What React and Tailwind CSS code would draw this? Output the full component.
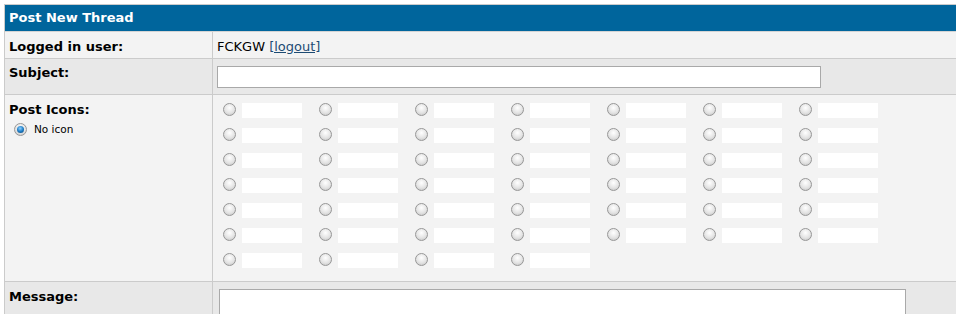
import React from 'react';

const font = { fontFamily: '"DejaVu Sans", Verdana, sans-serif' };

function Radio({ checked }) {
  return (
    <span className="relative inline-block w-[13px] h-[13px] shrink-0 rounded-full border border-[#979797] bg-[radial-gradient(circle_at_50%_35%,#ffffff_0%,#e4e4e4_55%,#c0c0c0_100%)]">
      {checked && (
        <span className="absolute left-[2px] top-[2px] w-[7px] h-[7px] rounded-full bg-[radial-gradient(circle_at_45%_35%,#8fd0ff_0%,#1f7fc8_50%,#0b3f6e_100%)]" />
      )}
    </span>
  );
}

function IconChoice() {
  return (
    <div className="flex items-start h-[25px]">
      <Radio />
      <span className="ml-[6px] w-[60px] h-[15px] bg-white" />
    </div>
  );
}

export default function App() {
  const icons = Array.from({ length: 46 }, (_, i) => i);

  return (
    <div className="bg-white w-[960px] pl-[4px] pt-[4px] text-[13px] text-black" style={font}>
      <div className="border-l border-t border-[#cbcbcb]">
        <div className="h-[26px] bg-[#00659c] text-white font-bold flex items-center pl-[4px]">
          Post New Thread
        </div>

        <div className="grid grid-cols-[208px_1fr] border-t border-[#d4d4d4] bg-[#f3f3f3] h-[27px]">
          <div className="border-r border-[#cbcbcb] font-bold pl-[4px] pt-[5px]">Logged in user:</div>
          <div className="pl-[4px] pt-[5px]">
            FCKGW{' '}
            <a href="#" className="underline text-[#1d4b73]">[logout]</a>
          </div>
        </div>

        <div className="grid grid-cols-[208px_1fr] border-t border-[#cbcbcb] bg-[#e8e8e8] h-[36px]">
          <div className="border-r border-[#cbcbcb] font-bold pl-[4px] pt-[4px]">Subject:</div>
          <div className="pl-[4px] pt-[7px]">
            <div className="w-[604px] h-[22px] bg-white border border-[#a9a9a9]" />
          </div>
        </div>

        <div className="grid grid-cols-[208px_1fr] border-t border-[#cbcbcb] bg-[#f3f3f3] h-[187px]">
          <div className="border-r border-[#cbcbcb] pl-[4px] pt-[5px]">
            <div className="font-bold">Post Icons:</div>
            <div className="flex items-center mt-[2px] pl-[5px]">
              <Radio checked />
              <span className="ml-[7px] text-[10.5px]">No icon</span>
            </div>
          </div>
          <div className="pl-[10px] pt-[8px]">
            <div className="grid grid-cols-[repeat(7,96px)]">
              {icons.map((i) => (
                <IconChoice key={i} />
              ))}
            </div>
          </div>
        </div>

        <div className="grid grid-cols-[208px_1fr] border-t border-[#cbcbcb] bg-[#e8e8e8] h-[40px]">
          <div className="border-r border-[#cbcbcb] font-bold pl-[4px] pt-[5px]">Message:</div>
          <div className="pl-[6px] pt-[7px]">
            <div className="w-[687px] h-[40px] bg-white border border-[#a9a9a9]" />
          </div>
        </div>
      </div>
    </div>
  );
}
